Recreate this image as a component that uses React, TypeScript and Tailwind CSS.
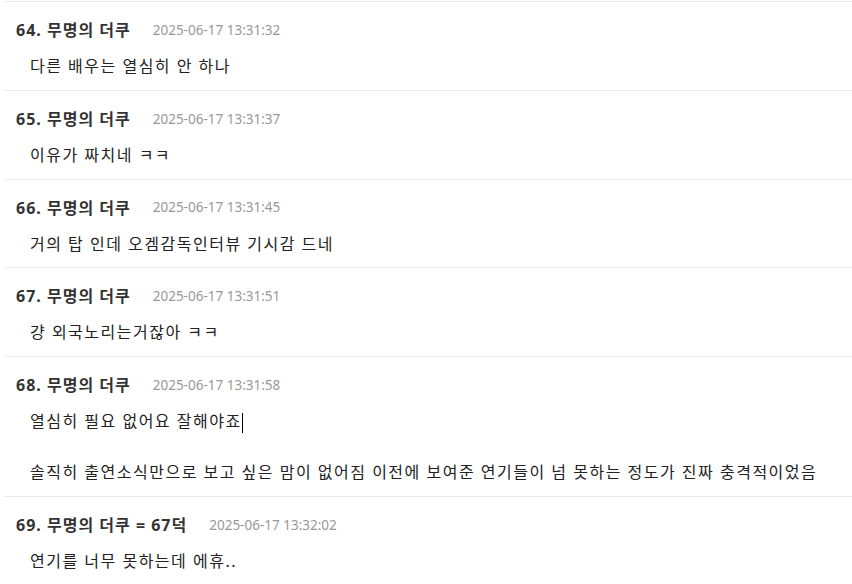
import React from "react";

type Item = { no: number; name: React.ReactNode; time: string; lines: React.ReactNode[] };

const items: Item[] = [
  { no: 64, name: "무명의 더쿠", time: "2025-06-17 13:31:32", lines: ["다른 배우는 열심히 안 하나"] },
  { no: 65, name: "무명의 더쿠", time: "2025-06-17 13:31:37", lines: ["이유가 짜치네 ㅋㅋ"] },
  { no: 66, name: "무명의 더쿠", time: "2025-06-17 13:31:45", lines: ["거의 탑 인데 오겜감독인터뷰 기시감 드네"] },
  { no: 67, name: "무명의 더쿠", time: "2025-06-17 13:31:51", lines: ["걍 외국노리는거잖아 ㅋㅋ"] },
  {
    no: 68,
    name: "무명의 더쿠",
    time: "2025-06-17 13:31:58",
    lines: [
      <span key="a">
        열심히 필요 없어요 잘해야죠
        <span className="inline-block w-px h-[20px] bg-black align-middle" />
      </span>,
      "",
      "솔직히 출연소식만으로 보고 싶은 맘이 없어짐 이전에 보여준 연기들이 넘 못하는 정도가 진짜 충격적이었음",
    ],
  },
  { no: 69, name: "무명의 더쿠 = 67덕", time: "2025-06-17 13:32:02", lines: ["연기를 너무 못하는데 에휴.."] },
];

export default function App() {
  return (
    <div
      className="w-[852px] h-[584px] overflow-hidden bg-white pt-px"
      style={{ fontFamily: '"Noto Sans", "Noto Sans CJK KR", sans-serif' }}
    >
      <div className="ml-1">
        {items.map((it) => (
          <div key={it.no} className="border-t border-[#ebebeb] pl-3 pt-[14px] pb-[10.75px]">
            <div className="flex items-center h-[28px]">
              <span className="text-[16px] font-bold text-[#333] tracking-[1px]">
                {it.no}. {it.name}
              </span>
              <span className="ml-[22px] text-[13.5px] text-[#999]">{it.time}</span>
            </div>
            <div className="mt-[9px] pl-[14px] text-[16px] text-[#222] tracking-[1.5px]">
              {it.lines.map((l, i) =>
                l === "" ? (
                  <div key={i} className="h-[25px]" />
                ) : (
                  <div key={i} className="h-[26px] leading-[26px] whitespace-nowrap">
                    {l}
                  </div>
                )
              )}
            </div>
          </div>
        ))}
      </div>
    </div>
  );
}
